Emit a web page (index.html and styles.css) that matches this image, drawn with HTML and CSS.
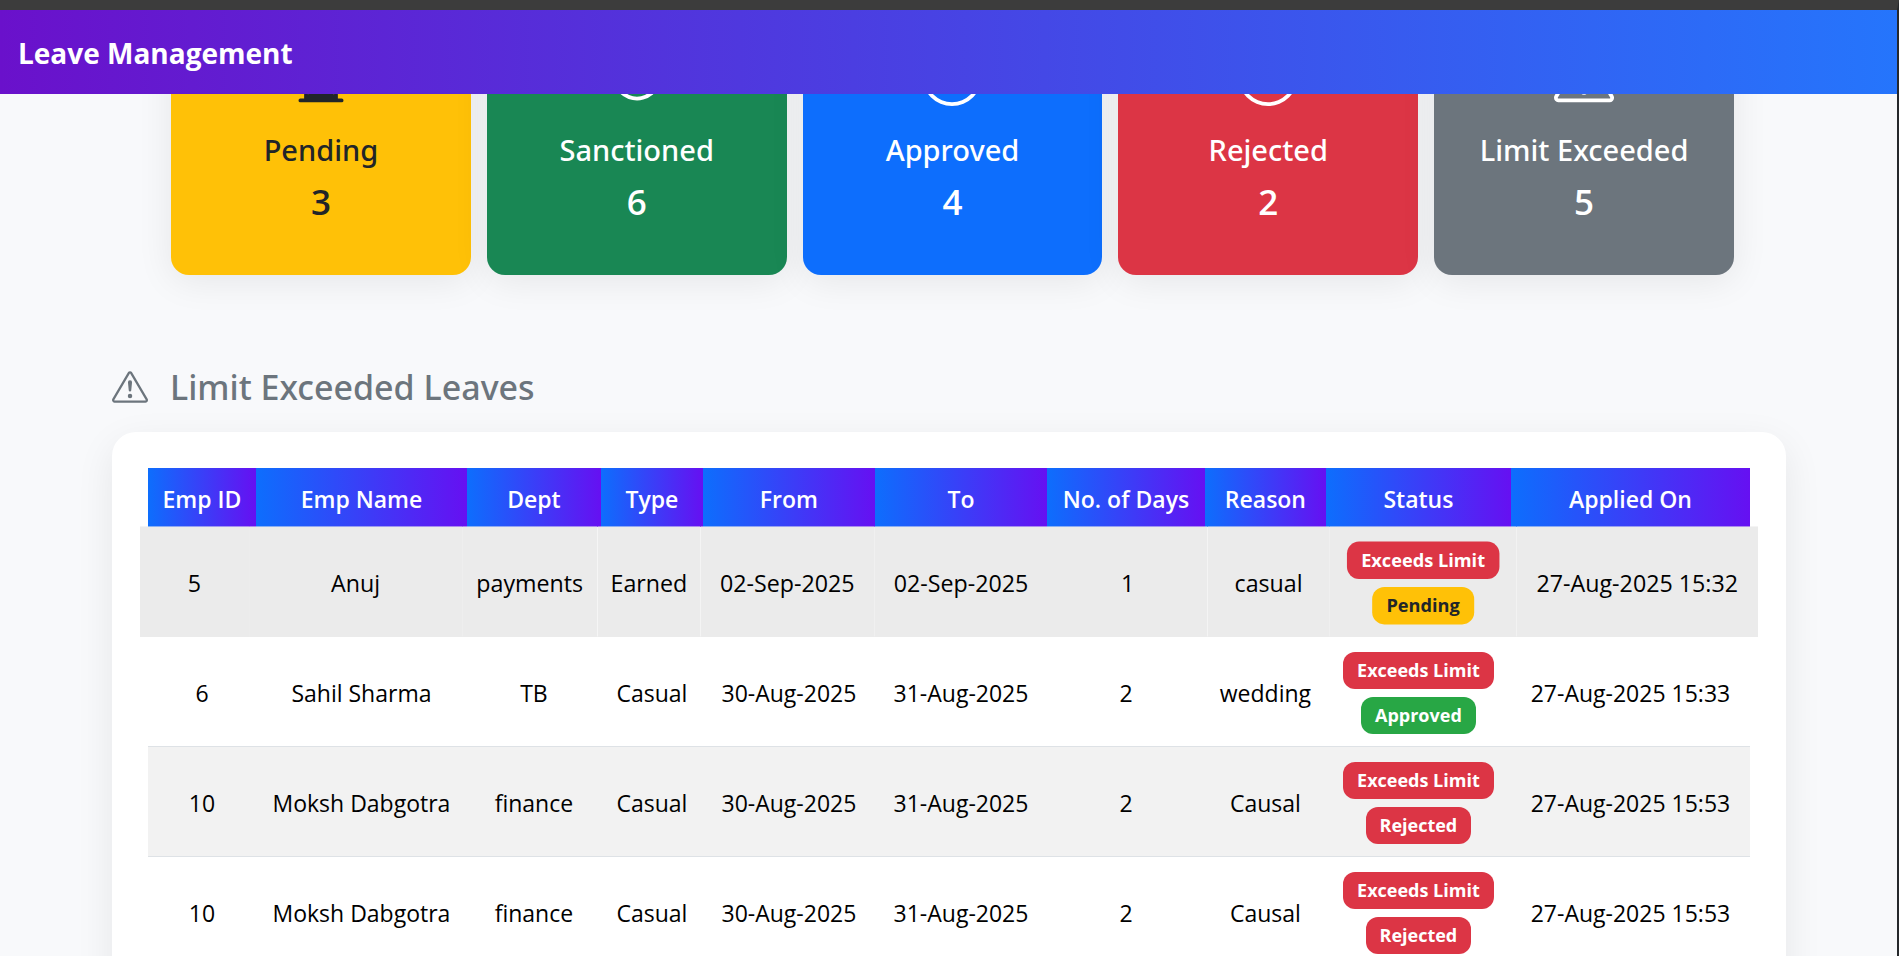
FILE: index.html
```html
<!DOCTYPE html>
<html lang="en">
<head>
<meta charset="utf-8">
<meta name="viewport" content="width=device-width, initial-scale=1">
<title>Leave Management</title>
<link rel="stylesheet" href="styles.css">
</head>
<body>
<svg class="sprite" aria-hidden="true">
  <symbol id="hourglass" viewBox="0 0 16 16"><path d="M2.5 15a.5.5 0 1 1 0-1h1v-1a4.5 4.5 0 0 1 2.557-4.06c.29-.139.443-.377.443-.59v-.7c0-.213-.154-.451-.443-.59A4.5 4.5 0 0 1 3.5 3V2h-1a.5.5 0 0 1 0-1h11a.5.5 0 0 1 0 1h-1v1a4.5 4.5 0 0 1-2.557 4.06c-.29.139-.443.377-.443.59v.7c0 .213.154.451.443.59A4.5 4.5 0 0 1 12.5 13v1h1a.5.5 0 0 1 0 1zm2-13v1c0 .537.12 1.045.337 1.5h6.326c.216-.455.337-.963.337-1.5V2zm3 6.35c0 .701-.478 1.236-1.011 1.492A3.5 3.5 0 0 0 4.5 13s.866-1.299 3-1.48zm1 0v3.17c2.134.181 3 1.48 3 1.48a3.5 3.5 0 0 0-1.989-3.158C8.978 9.586 8.5 9.052 8.5 8.351z"/></symbol>
  <symbol id="check2" viewBox="0 0 16 16"><path d="M2.5 8a5.5 5.5 0 0 1 8.25-4.764.5.5 0 0 0 .5-.866A6.5 6.5 0 1 0 14.5 8a.5.5 0 0 0-1 0 5.5 5.5 0 1 1-11 0z"/><path d="M15.354 3.354a.5.5 0 0 0-.708-.708L8 9.293 5.354 6.646a.5.5 0 1 0-.708.708l3 3a.5.5 0 0 0 .708 0z"/></symbol>
  <symbol id="check" viewBox="0 0 16 16"><path d="M8 15A7 7 0 1 1 8 1a7 7 0 0 1 0 14m0 1A8 8 0 1 0 8 0a8 8 0 0 0 0 16"/><path d="m10.97 4.97-.02.022-3.473 4.425-2.093-2.094a.75.75 0 0 0-1.06 1.06L6.97 11.03a.75.75 0 0 0 1.079-.02l3.992-4.99a.75.75 0 0 0-1.071-1.05"/></symbol>
  <symbol id="cross" viewBox="0 0 16 16"><path d="M8 15A7 7 0 1 1 8 1a7 7 0 0 1 0 14m0 1A8 8 0 1 0 8 0a8 8 0 0 0 0 16"/><path d="M4.646 4.646a.5.5 0 0 1 .708 0L8 7.293l2.646-2.647a.5.5 0 0 1 .708.708L8.707 8l2.647 2.646a.5.5 0 0 1-.708.708L8 8.707l-2.646 2.647a.5.5 0 0 1-.708-.708L7.293 8 4.646 5.354a.5.5 0 0 1 0-.708"/></symbol>
  <symbol id="warning" viewBox="0 0 16 16"><path d="M7.938 2.016A.13.13 0 0 1 8.002 2a.13.13 0 0 1 .063.016.15.15 0 0 1 .054.057l6.857 11.667c.036.06.035.124.002.183a.2.2 0 0 1-.054.06.1.1 0 0 1-.066.017H1.146a.1.1 0 0 1-.066-.017.2.2 0 0 1-.054-.06.18.18 0 0 1 .002-.183L7.884 2.073a.15.15 0 0 1 .054-.057m1.044-.45a1.13 1.13 0 0 0-1.96 0L.165 13.233c-.457.778.091 1.767.98 1.767h13.713c.889 0 1.438-.99.98-1.767z"/><path d="M7.002 12a1 1 0 1 1 2 0 1 1 0 0 1-2 0M7.1 5.995a.905.905 0 1 1 1.8 0l-.35 3.507a.552.552 0 0 1-1.1 0z"/></symbol>
</svg>
<div class="app">
  <header class="navbar"><h1 class="brand">Leave Management</h1></header>
  <main class="content">
    <section class="stats" aria-label="Leave summary">
      <article class="stat stat-pending"><svg class="stat-icon"><use href="#hourglass"/></svg><h2 class="stat-label">Pending</h2><p class="stat-value">3</p></article>
      <article class="stat stat-sanctioned"><svg class="stat-icon"><use href="#check2"/></svg><h2 class="stat-label">Sanctioned</h2><p class="stat-value">6</p></article>
      <article class="stat stat-approved"><svg class="stat-icon"><use href="#check"/></svg><h2 class="stat-label">Approved</h2><p class="stat-value">4</p></article>
      <article class="stat stat-rejected"><svg class="stat-icon"><use href="#cross"/></svg><h2 class="stat-label">Rejected</h2><p class="stat-value">2</p></article>
      <article class="stat stat-exceeded"><svg class="stat-icon"><use href="#warning"/></svg><h2 class="stat-label">Limit Exceeded</h2><p class="stat-value">5</p></article>
    </section>
    <section class="leaves">
      <h2 class="section-title"><svg class="title-icon"><use href="#warning"/></svg>Limit Exceeded Leaves</h2>
      <div class="panel">
        <table class="table">
          <colgroup>
            <col class="col-id"><col class="col-name"><col class="col-dept"><col class="col-type"><col class="col-date"><col class="col-date"><col class="col-days"><col class="col-reason"><col class="col-status"><col class="col-applied">
          </colgroup>
          <thead>
            <tr><th>Emp ID</th><th>Emp Name</th><th>Dept</th><th>Type</th><th>From</th><th>To</th><th>No. of Days</th><th>Reason</th><th>Status</th><th>Applied On</th></tr>
          </thead>
          <tbody>
            <tr class="is-raised"><td>5</td><td>Anuj</td><td>payments</td><td>Earned</td><td>02-Sep-2025</td><td>02-Sep-2025</td><td>1</td><td>casual</td><td><div class="badges"><span class="badge badge-red">Exceeds Limit</span><span class="badge badge-yellow">Pending</span></div></td><td>27-Aug-2025 15:32</td></tr>
            <tr><td>6</td><td>Sahil Sharma</td><td>TB</td><td>Casual</td><td>30-Aug-2025</td><td>31-Aug-2025</td><td>2</td><td>wedding</td><td><div class="badges"><span class="badge badge-red">Exceeds Limit</span><span class="badge badge-green">Approved</span></div></td><td>27-Aug-2025 15:33</td></tr>
            <tr><td>10</td><td>Moksh Dabgotra</td><td>finance</td><td>Casual</td><td>30-Aug-2025</td><td>31-Aug-2025</td><td>2</td><td>Causal</td><td><div class="badges"><span class="badge badge-red">Exceeds Limit</span><span class="badge badge-red">Rejected</span></div></td><td>27-Aug-2025 15:53</td></tr>
            <tr><td>10</td><td>Moksh Dabgotra</td><td>finance</td><td>Casual</td><td>30-Aug-2025</td><td>31-Aug-2025</td><td>2</td><td>Causal</td><td><div class="badges"><span class="badge badge-red">Exceeds Limit</span><span class="badge badge-red">Rejected</span></div></td><td>27-Aug-2025 15:53</td></tr>
          </tbody>
        </table>
      </div>
    </section>
  </main>
</div>
</body>
</html>
```
FILE: styles.css
```css
*, *::before, *::after { box-sizing: border-box; }

body {
  margin: 0;
  font-family: "Open Sans", "Noto Sans", sans-serif;
  font-size: 23px;
  color: #212529;
  background: #3c3c3c;
}

h1, h2, p { margin: 0; }

.sprite { display: none; }
svg { fill: currentColor; }

.app {
  height: 100vh;
  overflow: hidden;
  border-top: 10px solid #3c3c3c;
  border-right: 2px solid #26282b;
  background: #f8f9fb;
}

.navbar {
  position: relative;
  z-index: 1;
  display: flex;
  align-items: center;
  height: 84px;
  padding: 2px 18px 0;
  color: #fff;
  background: linear-gradient(90deg, #6a11cb, #2575fc);
}

.brand { font-size: 28px; font-weight: 700; }

.content {
  display: flex;
  flex-direction: column;
  gap: 90px;
  margin-top: -72px;
  padding: 0 111px 0 112px;
}

.stats {
  display: grid;
  grid-template-columns: repeat(5, 1fr);
  gap: 16px;
  padding: 0 52px 0 59px;
}

.stat {
  display: flex;
  flex-direction: column;
  align-items: center;
  padding: 24px 12px 51px;
  border-radius: 18px;
  color: #fff;
  box-shadow: 0 6px 36px rgba(0, 0, 0, 0.08);
}

.stat-pending { color: #212529; background: #ffc107; }
.stat-sanctioned { background: #198754; }
.stat-approved { background: #0d6efd; }
.stat-rejected { background: #dc3545; }
.stat-exceeded { background: #6c757d; }

.stat-icon { width: 60px; height: 60px; }
.stat-label {
  margin: 26px 0 12px;
  font-family: "Noto Sans", "Open Sans", sans-serif;
  font-size: 29px;
  line-height: 36px;
  font-weight: 500;
}
.stat-value { font-size: 35px; line-height: 44px; font-weight: 600; }

.section-title {
  display: flex;
  align-items: center;
  gap: 22px;
  margin-bottom: 23px;
  font-family: "Noto Sans", "Open Sans", sans-serif;
  font-size: 34px;
  line-height: 44px;
  font-weight: 500;
  color: #6c757d;
}
.title-icon { width: 36px; height: 36px; }

.panel {
  padding: 36px;
  border-radius: 24px;
  background: #fff;
  box-shadow: 0 12px 38px rgba(0, 0, 0, 0.08);
}

.table {
  width: 100%;
  table-layout: fixed;
  border-collapse: collapse;
  text-align: center;
  color: #000;
}

.col-id { width: 6.74%; }
.col-name { width: 13.17%; }
.col-dept { width: 8.36%; }
.col-type { width: 6.37%; }
.col-date { width: 10.74%; }
.col-days { width: 9.86%; }
.col-reason { width: 7.55%; }
.col-status { width: 11.55%; }
.col-applied { width: 14.92%; }

.table th {
  height: 59px;
  padding: 2px 0 0;
  font-size: 23px;
  font-weight: 600;
  color: #fff;
  white-space: nowrap;
  background: linear-gradient(90deg, #0d6efd, #6610f2);
}

.table td {
  padding: 15px 0 12px;
  border-bottom: 1px solid #dee2e6;
  white-space: nowrap;
}

.table tbody tr:nth-child(odd) { background: #f2f2f2; }
.table tbody tr.is-raised:nth-child(odd) { background: #ebebeb; transform: scale(1.01); }
.table .is-raised td { border-color: #f4f4f4; }

.badges {
  display: flex;
  flex-direction: column;
  align-items: center;
  gap: 8px;
}

.badge {
  padding: 6px 14px;
  border-radius: 12px;
  font-size: 18px;
  line-height: 25px;
  font-weight: 700;
  color: #fff;
}
.badge-red { background: #dc3545; }
.badge-green { background: #28a745; }
.badge-yellow { color: #212529; background: #ffc107; }
```
